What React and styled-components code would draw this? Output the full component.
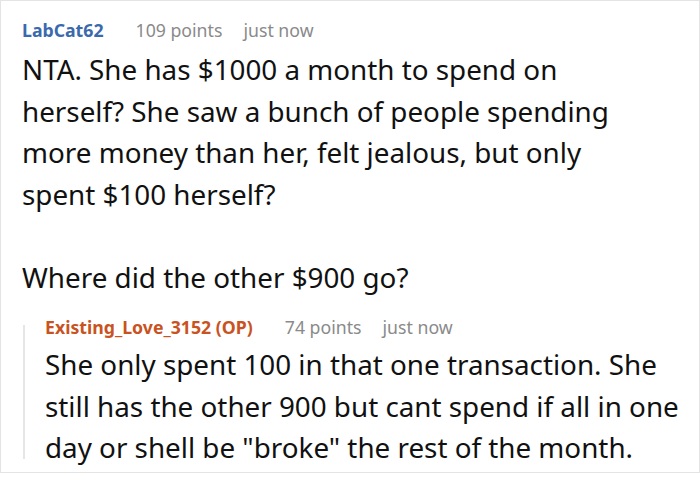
import React from "react";
import styled, { createGlobalStyle } from "styled-components";

const GlobalStyle = createGlobalStyle`
    html, body {
        margin: 0;
        padding: 0;
        background: #ffffff;
    }
    body {
        font-family: "Noto Sans", "Open Sans", sans-serif;
        color: #111111;
    }
`;

const Card = styled.div`
    box-sizing: border-box;
    width: 700px;
    height: 473px;
    border: 1px solid #e4e4e4;
    padding: 17px 8px 0 21px;
    background: #ffffff;
`;

const Comment = styled.div`
    display: flex;
    flex-direction: column;
`;

const Meta = styled.div`
    display: flex;
    align-items: baseline;
    font-size: 17.7px;
    line-height: 24px;
`;

const Author = styled.span`
    font-weight: bold;
    color: ${(props) => props.color};
    margin-right: 32px;
`;

const Points = styled.span`
    color: #8a8a8a;
    margin-right: 21px;
`;

const Time = styled.span`
    color: #8a8a8a;
`;

const Body = styled.div`
    font-size: 27.8px;
    line-height: 41.5px;
    margin-top: ${(props) => props.gap}px;
    max-width: ${(props) => props.width}px;
    color: #111111;
    p {
        margin: 0;
    }
    p + p {
        margin-top: 41.5px;
    }
`;

const Reply = styled.div`
    display: flex;
    margin-top: 17px;
`;

const ThreadLine = styled.div`
    flex: 0 0 2px;
    margin: 10px 0 10px 1px;
    background: #e6e6e6;
`;

const ReplyContent = styled.div`
    display: flex;
    flex-direction: column;
    padding-left: 20px;
`;

const MetaRow = ({ author, color, points, time }) => (
    <Meta>
        <Author color={color}>{author}</Author>
        <Points>{points}</Points>
        <Time>{time}</Time>
    </Meta>
);

const App = () => {
    return (
        <>
            <GlobalStyle />
            <Card>
                <Comment>
                    <MetaRow author="LabCat62" color="#3a69ad" points="109 points" time="just now" />
                    <Body gap={7} width={630}>
                        <p>
                            NTA. She has $1000 a month to spend on herself? She saw a bunch of people
                            spending more money than her, felt jealous, but only spent $100 herself?
                        </p>
                        <p>Where did the other $900 go?</p>
                    </Body>
                </Comment>
                <Reply>
                    <ThreadLine />
                    <ReplyContent>
                        <MetaRow author="Existing_Love_3152 (OP)" color="#c9531f" points="74 points" time="just now" />
                        <Body gap={5}>
                            <p>
                                She only spent 100 in that one transaction. She still has the other 900 but
                                cant spend if all in one day or shell be "broke" the rest of the month.
                            </p>
                        </Body>
                    </ReplyContent>
                </Reply>
            </Card>
        </>
    );
};

export default App;
